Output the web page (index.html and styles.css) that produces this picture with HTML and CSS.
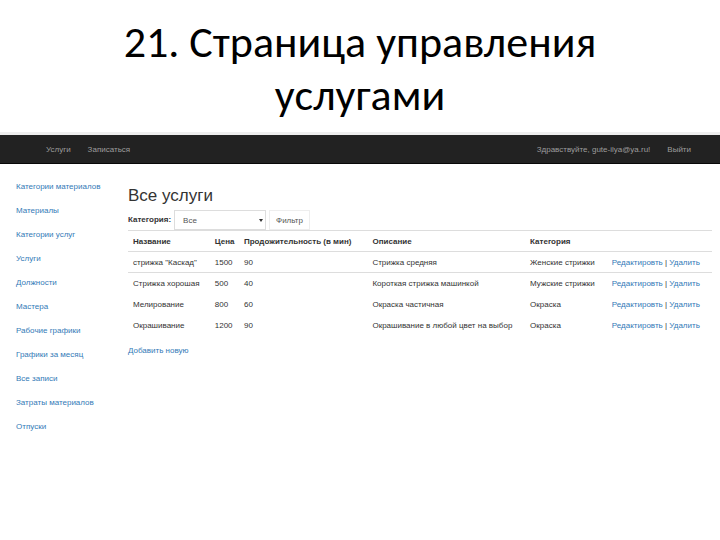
FILE: index.html
```
<!doctype html>
<html lang="ru">
    <head>
        <meta charset="utf-8">
        <meta name="viewport" content="width=device-width, initial-scale=1.0">
        <title>Страница управления услугами</title>
        <link rel="stylesheet" href="styles.css">
    </head>
    <body>
        <h1 class="slide-title">21. Страница управления услугами</h1>

        <nav class="navbar">
            <a href="#">Услуги</a>
            <a href="#">Записаться</a>
            <a href="#" class="navbar-user">Здравствуйте, gute-ilya@ya.ru!</a>
            <a href="#">Выйти</a>
        </nav>

        <div class="page">
            <ul class="side-menu">
                <li><a href="#">Категории материалов</a></li>
                <li><a href="#">Материалы</a></li>
                <li><a href="#">Категории услуг</a></li>
                <li><a href="#">Услуги</a></li>
                <li><a href="#">Должности</a></li>
                <li><a href="#">Мастера</a></li>
                <li><a href="#">Рабочие графики</a></li>
                <li><a href="#">Графики за месяц</a></li>
                <li><a href="#">Все записи</a></li>
                <li><a href="#">Затраты материалов</a></li>
                <li><a href="#">Отпуски</a></li>
            </ul>

            <main class="content">
                <h2>Все услуги</h2>
                <form class="filter">
                    <label for="category">Категория:</label>
                    <div class="select-box">
                        <select id="category" name="category">
                            <option>Все</option>
                        </select>
                    </div>
                    <button type="button">Фильтр</button>
                </form>

                <table class="services">
                    <colgroup>
                        <col class="col-name">
                        <col class="col-price">
                        <col class="col-time">
                        <col class="col-text">
                        <col class="col-category">
                        <col>
                    </colgroup>
                    <thead>
                        <tr><th>Название</th><th>Цена</th><th>Продожительность (в мин)</th><th>Описание</th><th>Категория</th><th></th></tr>
                    </thead>
                    <tbody>
                        <tr><td>стрижка "Каскад"</td><td>1500</td><td>90</td><td>Стрижка средняя</td><td>Женские стрижки</td><td><a href="#">Редактировть</a> | <a href="#">Удалить</a></td></tr>
                        <tr><td>Стрижка хорошая</td><td>500</td><td>40</td><td>Короткая стрижка машинкой</td><td>Мужские стрижки</td><td><a href="#">Редактировть</a> | <a href="#">Удалить</a></td></tr>
                        <tr><td>Мелирование</td><td>800</td><td>60</td><td>Окраска частичная</td><td>Окраска</td><td><a href="#">Редактировть</a> | <a href="#">Удалить</a></td></tr>
                        <tr><td>Окрашивание</td><td>1200</td><td>90</td><td>Окрашивание в любой цвет на выбор</td><td>Окраска</td><td><a href="#">Редактировть</a> | <a href="#">Удалить</a></td></tr>
                    </tbody>
                </table>
                <a href="#">Добавить новую</a>
            </main>
        </div>
    </body>
</html>
```
FILE: styles.css
```
body {
    margin: 0;
    background: #fff;
    color: #333;
    font-family: "Liberation Sans", Arial, sans-serif;
    font-size: 8px;
    line-height: 12px;
}
a {
    color: #337ab7;
    text-decoration: none;
}

.slide-title {
    margin: 0;
    padding: 16px 100px 10px;
    color: #000;
    font-family: Calibri, Carlito, "Noto Sans", sans-serif;
    font-size: 44px;
    font-weight: normal;
    line-height: 53px;
    text-align: center;
}

.navbar {
    display: flex;
    gap: 17px;
    padding: 9px 29px 7px 46px;
    border-top: solid 3px #eee;
    border-bottom: solid 1px #080808;
    background: #222;
}
.navbar a {
    color: #9d9d9d;
}
.navbar .navbar-user {
    margin-left: auto;
}

.page {
    display: flex;
    padding: 17px 8px 16px 16px;
}
.side-menu {
    width: 112px;
    margin: 0;
    padding: 0;
    list-style: none;
}
.side-menu li {
    margin-bottom: 12px;
}
.content {
    flex: 1;
}

h2 {
    margin: 4px 0 3px;
    font-size: 17px;
    font-weight: normal;
    line-height: 22px;
}
.filter {
    display: flex;
    align-items: center;
    gap: 3px;
}
.filter label {
    font-weight: bold;
}
.select-box {
    position: relative;
    width: 92px;
}
/* small arrow of the drop-down */
.select-box::after {
    content: "";
    position: absolute;
    top: 9px;
    right: 3px;
    border: solid 2px transparent;
    border-top: solid 3px #333;
}
select, button {
    height: 20px;
    padding: 1px 8px 0;
    border: solid 1px #ddd;
    background: #fff;
    color: #555;
    font: inherit;
}
select {
    display: block;
    width: 100%;
    appearance: none;
}
button {
    padding: 1px 6px 0;
    border-color: #eee;
}

.services {
    width: 100%;
    margin-bottom: 10px;
    border-collapse: collapse;
    table-layout: fixed;
}
.services th, .services td {
    height: 19px;
    padding: 1px 0 0 5px;
    border-top: solid 1px #ddd;
    text-align: left;
    white-space: nowrap;
}
.services tr:nth-child(n+3) td {
    border-top-color: #fff;
}
.col-name {
    width: 14%;
}
.col-price {
    width: 5%;
}
.col-time {
    width: 22%;
}
.col-text {
    width: 27%;
}
.col-category {
    width: 14%;
}
```
